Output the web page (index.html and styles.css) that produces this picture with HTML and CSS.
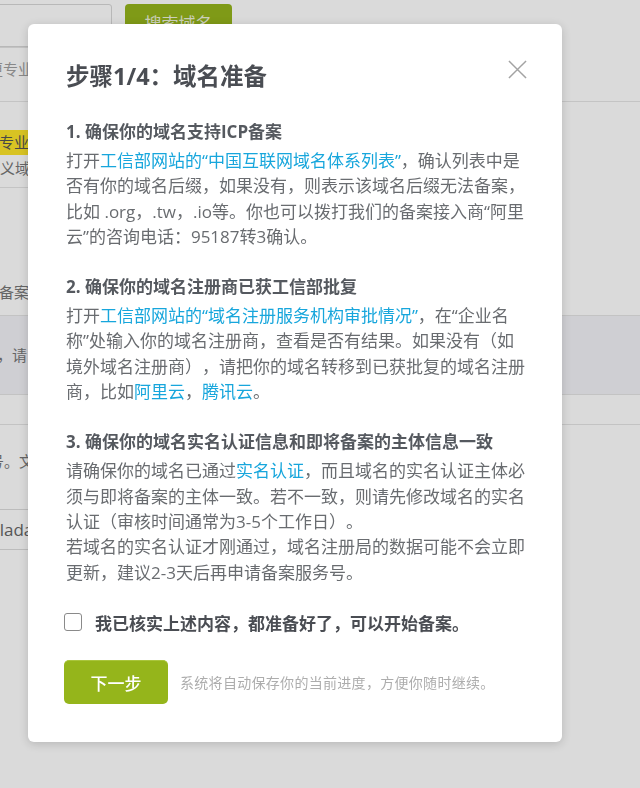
FILE: index.html
```html
<!DOCTYPE html>
<html lang="zh-CN">
<head>
<meta charset="utf-8">
<title>步骤1/4：域名准备</title>
<link rel="stylesheet" href="styles.css">
</head>
<body>
<div class="page">
  <div class="search-row">
    <div class="search-input"></div>
    <div class="search-btn">搜索域名</div>
  </div>
  <div class="row-b"><span class="clip-text">更专业</span></div>
  <div class="row-c">
    <span class="tag">精专业</span>
    <span class="muted-text">定义域</span>
  </div>
  <div class="row-d"><span class="muted-text">名备案</span></div>
  <div class="band"><span class="muted-text">案，请</span></div>
  <div class="row-e"></div>
  <div class="row-f"><span class="muted-text">号。文</span></div>
  <div class="row-g"><span class="muted-text">hilada</span></div>
</div>

<div class="overlay"></div>

<div class="modal">
  <div class="modal-head">
    <h1 class="title">步骤1/4：域名准备</h1>
    <svg class="close" width="20" height="20" viewBox="0 0 20 20"><path d="M1 1 L19 19 M19 1 L1 19" stroke="#a3a3a3" stroke-width="1.6" fill="none"/></svg>
  </div>

  <section class="step">
    <h2 class="step-title">1. 确保你的域名支持ICP备案</h2>
    <p class="step-text">打开<a class="link">工信部网站的“中国互联网域名体系列表”</a>，确认列表中是否有你的域名后缀，如果没有，则表示该域名后缀无法备案，比如 .org，.tw，.io等。你也可以拨打我们的备案接入商“阿里云”的咨询电话：95187转3确认。</p>
  </section>

  <section class="step">
    <h2 class="step-title">2. 确保你的域名注册商已获工信部批复</h2>
    <p class="step-text">打开<a class="link">工信部网站的“域名注册服务机构审批情况”</a>，在“企业名称”处输入你的域名注册商，查看是否有结果。如果没有（如境外域名注册商），请把你的域名转移到已获批复的域名注册商，比如<a class="link">阿里云</a>，<a class="link">腾讯云</a>。</p>
  </section>

  <section class="step">
    <h2 class="step-title">3. 确保你的域名实名认证信息和即将备案的主体信息一致</h2>
    <p class="step-text">请确保你的域名已通过<a class="link">实名认证</a>，而且域名的实名认证主体必须与即将备案的主体一致。若不一致，则请先修改域名的实名认证（审核时间通常为3-5个工作日）。<br>若域名的实名认证才刚通过，域名注册局的数据可能不会立即更新，建议2-3天后再申请备案服务号。</p>
  </section>

  <label class="confirm">
    <span class="checkbox"></span>
    <span class="confirm-text">我已核实上述内容，都准备好了，可以开始备案。</span>
  </label>

  <div class="actions">
    <button class="next-btn">下一步</button>
    <span class="hint">系统将自动保存你的当前进度，方便你随时继续。</span>
  </div>
</div>
</body>
</html>
```

FILE: styles.css
```css
* { box-sizing: border-box; }
html, body { margin: 0; padding: 0; }
body {
  width: 640px;
  height: 788px;
  overflow: hidden;
  background: #ffffff;
  font-family: "Open Sans", "Noto Sans CJK SC", sans-serif;
  position: relative;
  text-spacing-trim: space-all;
  text-autospace: no-autospace;
}

/* background page */
.page {
  display: flex;
  flex-direction: column;
  padding-top: 4px;
  color: #777;
  font-size: 15px;
}
.search-row {
  display: flex;
  gap: 13px;
  height: 43px;
  margin-left: -60px;
}
.search-input {
  width: 172px;
  border: 1px solid #d8d8d8;
  border-radius: 3px;
  background: #fff;
}
.search-btn {
  width: 107px;
  background: #95b51b;
  border-radius: 4px;
  color: rgba(255, 255, 255, 0.85);
  font-size: 17px;
  text-align: center;
  line-height: 40px;
}
.row-b {
  height: 55px;
  border-bottom: 1px solid #e6e6e6;
  display: flex;
  align-items: flex-start;
  padding-top: 10px;
  background: linear-gradient(#e4e4e4, #e4e4e4) left top / 30px 1px no-repeat;
}
.clip-text {
  margin-left: -12px;
  color: #a0a0a0;
  font-size: 15px;
  line-height: 24px;
}
.muted-text {
  color: #777;
  white-space: nowrap;
  font-size: 15px;
  line-height: 24px;
}
.row-c {
  height: 86px;
  width: 30px;
  border-bottom: 1px solid #e6e6e6;
  display: flex;
  flex-direction: column;
  padding-top: 28px;
}
.tag {
  display: block;
  background: #fde52a;
  color: #555;
  margin-left: -16px;
  width: 60px;
  line-height: 25px;
  font-size: 15px;
  white-space: nowrap;
}
.row-c .muted-text { margin-left: -15px; margin-top: 1px; }
.row-d {
  height: 127px;
  display: flex;
  align-items: flex-end;
  padding-bottom: 11px;
}
.row-d .muted-text { margin-left: -16px; }
.band {
  height: 80px;
  background: #f2f3f7;
  border-top: 1px solid #e4e4e4;
  border-bottom: 1px solid #e4e4e4;
  display: flex;
  align-items: center;
}
.band .muted-text { margin-left: -18px; }
.row-e {
  height: 30px;
  border-bottom: 1px solid #e4e4e4;
}
.row-f {
  height: 84px;
  display: flex;
  align-items: center;
  padding-bottom: 12px;
}
.row-f .muted-text { margin-left: -11px; }
.row-g {
  height: 41px;
  width: 80px;
  border-top: 1px solid #dcdcdc;
  border-bottom: 1px solid #dcdcdc;
  display: flex;
  align-items: center;
}
.row-g .muted-text { margin-left: -15px; font-size: 17px; color: #666; }

.overlay {
  position: fixed;
  inset: 0;
  background: rgba(0, 0, 0, 0.145);
}

/* modal */
.modal {
  position: absolute;
  left: 28px;
  top: 24px;
  width: 534px;
  height: 718px;
  background: #fff;
  border-radius: 6px;
  box-shadow: 0 2px 10px rgba(0, 0, 0, 0.16);
  padding: 35px 34px 0 38px;
}
.modal-head {
  display: flex;
  justify-content: space-between;
  align-items: flex-start;
  margin-bottom: 26px;
}
.title {
  margin: 0;
  font-size: 23.5px;
  line-height: 34px;
  font-weight: 700;
  color: #4a4d53;
}
.close {
  margin-top: 1px;
  margin-right: 1px;
  width: 19px;
  height: 19px;
}
.step { margin-bottom: 25px; }
.step-title {
  margin: 0 0 4px 0;
  font-size: 17px;
  line-height: 25px;
  font-weight: 700;
  color: #55595f;
}
.step-text {
  margin: 0;
  font-size: 17px;
  line-height: 25.3px;
  color: #696c70;
}
.link { color: #17a6dc; text-decoration: none; }

.confirm {
  display: flex;
  align-items: center;
  gap: 13px;
  height: 25px;
}
.checkbox {
  width: 18px;
  height: 18px;
  border: 1.5px solid #8a8a8a;
  border-radius: 3px;
  margin-left: -2px;
  background: #fff;
}
.confirm-text {
  font-size: 17px;
  font-weight: 700;
  color: #4a4d53;
}
.actions {
  display: flex;
  align-items: center;
  gap: 12px;
  margin-top: 25px;
}
.next-btn {
  width: 104px;
  height: 44px;
  margin-left: -2px;
  border: none;
  border-top: 1px solid #a9c53c;
  border-radius: 5px;
  background: #95b51b;
  color: #fff;
  font-family: "Open Sans", "Noto Sans CJK SC", sans-serif;
  font-size: 17px;
  font-weight: 500;
}
.hint {
  font-size: 14px;
  color: #adadad;
  letter-spacing: 0.3px;
}
```
